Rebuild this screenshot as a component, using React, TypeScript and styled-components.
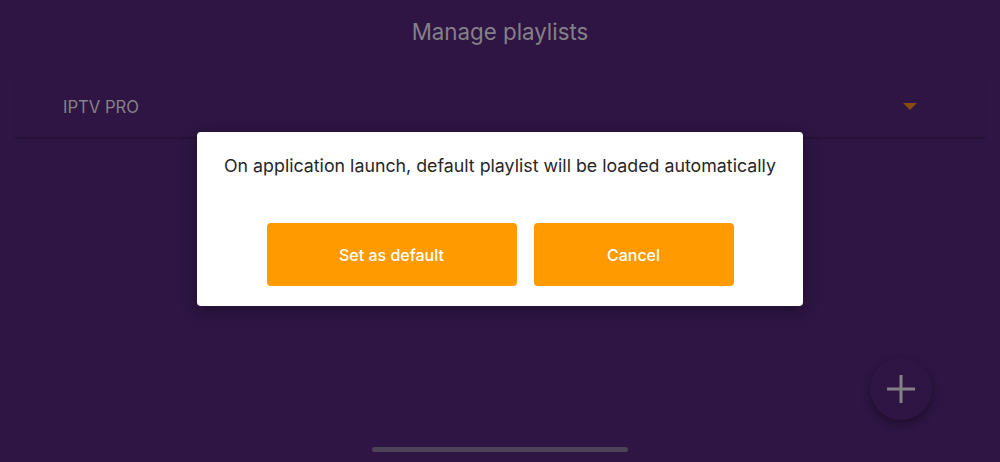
import styled, { createGlobalStyle } from 'styled-components';

const GlobalStyle = createGlobalStyle`
  html, body {
    margin: 0;
    padding: 0;
    background: #2e1544;
  }
  body {
    font-family: Inter, 'Noto Sans', sans-serif;
  }
`;

const Screen = styled.div`
  position: relative;
  width: 1000px;
  height: 462px;
  overflow: hidden;
  background: #2e1544;
  display: flex;
  flex-direction: column;
`;

const Header = styled.div`
  height: 62px;
  display: flex;
  align-items: center;
  justify-content: center;
  color: #858088;
  font-size: 22.3px;
  font-weight: 400;
`;

const Dropdown = styled.div`
  margin: 18px 15px 0;
  height: 57px;
  padding: 0 68px 0 48px;
  display: flex;
  align-items: center;
  justify-content: space-between;
  border-radius: 3px;
  box-shadow: 0 2px 2px rgba(0, 0, 0, 0.18);
`;

const DropdownLabel = styled.span`
  color: #878289;
  font-size: 16.6px;
  font-weight: 400;
  margin-top: -4px;
`;

const Caret = styled.div`
  width: 0;
  height: 0;
  border-left: 7px solid transparent;
  border-right: 7px solid transparent;
  border-top: 7px solid #8a4c0c;
  margin-top: -4px;
`;

const Dialog = styled.div`
  position: absolute;
  left: 197px;
  top: 132px;
  width: 606px;
  height: 174px;
  background: #ffffff;
  border-radius: 4px;
  box-shadow: 0 4px 16px rgba(0, 0, 0, 0.35);
  display: flex;
  flex-direction: column;
  align-items: center;
  box-sizing: border-box;
  padding-top: 22px;
`;

const Message = styled.p`
  margin: 0;
  color: #262626;
  font-size: 17.8px;
  line-height: 24px;
  font-weight: 400;
`;

const Actions = styled.div`
  margin-top: 45px;
  display: flex;
  gap: 17px;
`;

const Button = styled.button<{ $w: number }>`
  width: ${p => p.$w}px;
  height: 63px;
  border: none;
  border-radius: 4px;
  background: #ff9a00;
  color: #ffffff;
  font-family: Inter, 'Noto Sans', sans-serif;
  font-size: 16px;
  font-weight: 500;
  cursor: pointer;
`;

const Fab = styled.div`
  position: absolute;
  left: 870px;
  top: 358px;
  width: 62px;
  height: 62px;
  border-radius: 50%;
  background: #2e1544;
  box-shadow: 0 4px 8px rgba(0, 0, 0, 0.35);
  display: flex;
  align-items: center;
  justify-content: center;
`;

const HomeBar = styled.div`
  position: absolute;
  left: 372px;
  top: 447px;
  width: 256px;
  height: 5px;
  border-radius: 3px;
  background: #4d4356;
`;

export default function App() {
  return (
    <>
      <GlobalStyle />
      <Screen>
        <Header>Manage playlists</Header>
        <Dropdown>
          <DropdownLabel>IPTV PRO</DropdownLabel>
          <Caret />
        </Dropdown>
        <Fab>
          <svg width="30" height="30" viewBox="0 0 30 30">
            <path d="M15 1v28M1 15h28" stroke="#858088" strokeWidth="3" />
          </svg>
        </Fab>
        <HomeBar />
        <Dialog>
          <Message>On application launch, default playlist will be loaded automatically</Message>
          <Actions>
            <Button $w={250}>Set as default</Button>
            <Button $w={200}>Cancel</Button>
          </Actions>
        </Dialog>
      </Screen>
    </>
  );
}
